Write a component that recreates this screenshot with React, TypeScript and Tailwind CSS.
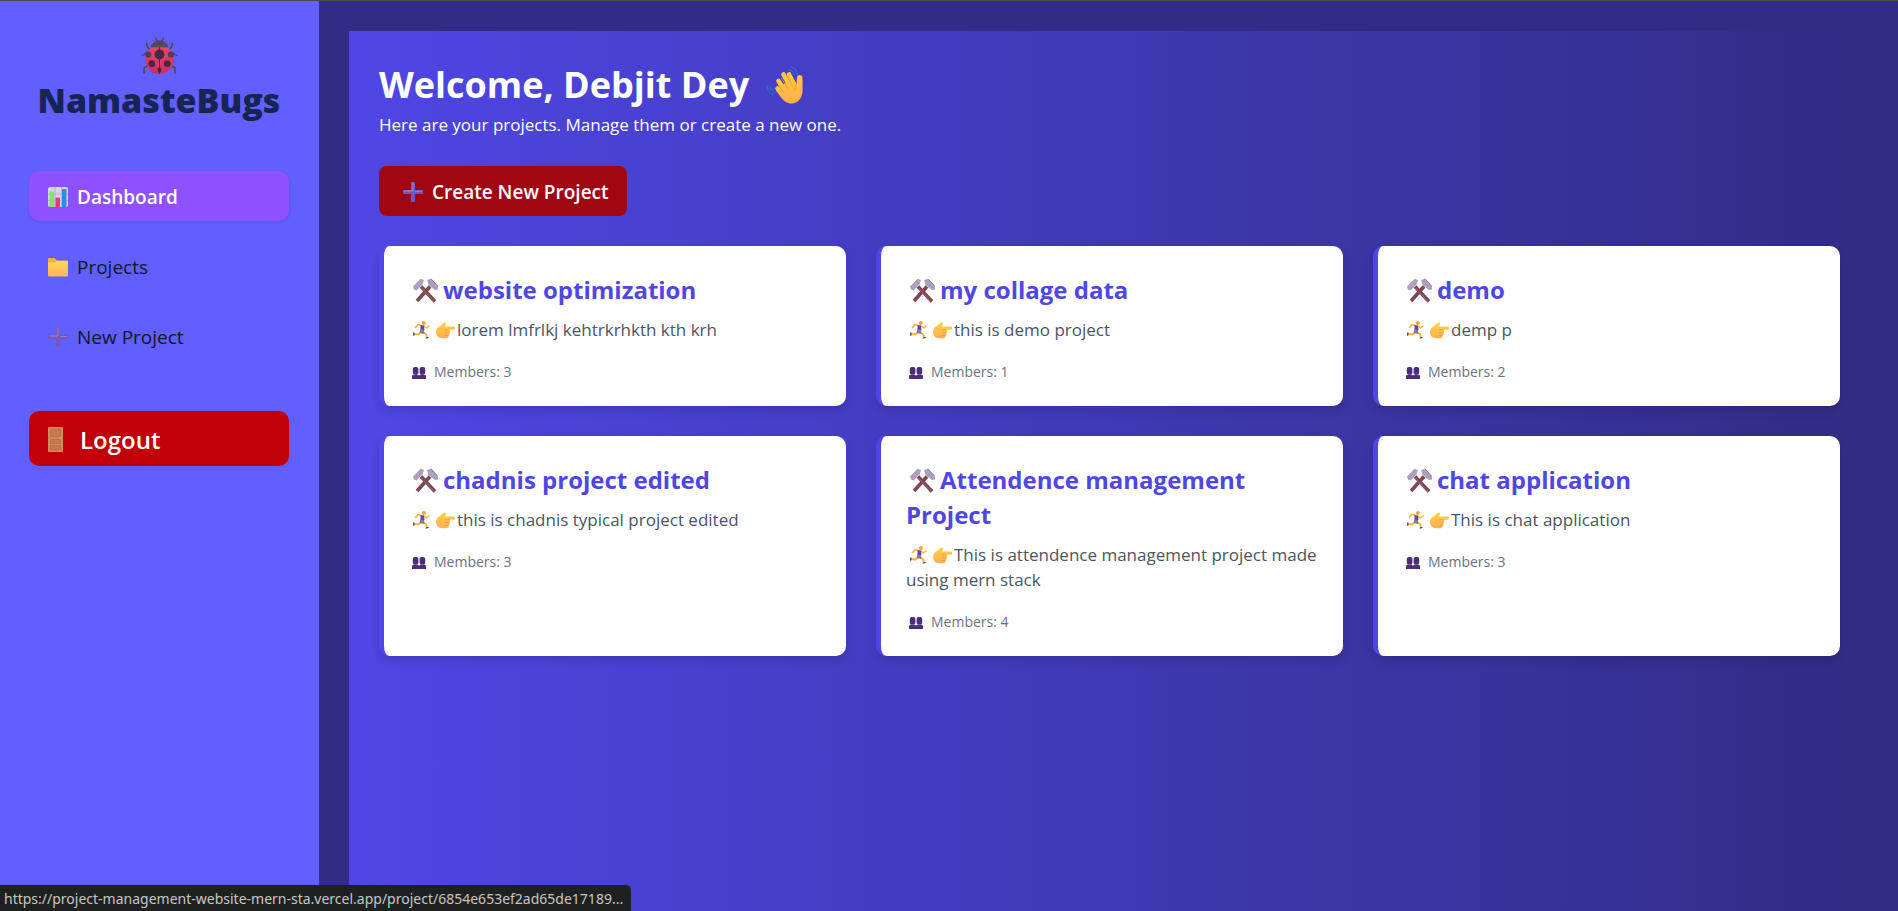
import React from "react";

type IconProps = { className?: string };

function Ladybug({ className }: IconProps) {
  return (
    <svg viewBox="0 0 36 36" className={className} aria-hidden="true">
      <defs>
        <linearGradient id="bug" x1="0" y1="0" x2="0" y2="1">
          <stop offset="0" stopColor="#e84a68" />
          <stop offset="1" stopColor="#c92a68" />
        </linearGradient>
      </defs>
      <g fill="none" stroke="#4d4457" strokeWidth="1.400" strokeLinecap="round">
        <path d="M14.300 1l1.500 3M21.700 1l-1.500 3" />
        <path d="M5.500 6q0 4 2.500 5.500M30.500 6q0 4-2.500 5.500M1 18l2.500-1.500 2.500 1M35 18l-2.500-1.500-2.500 1M3 35v-5l2.500-1.500M33 35v-5l-2.500-1.500" />
      </g>
      <circle cx="18" cy="22" r="14" fill="url(#bug)" />
      <path d="M9.500 10C10.500 5.500 14 3.500 18 3.500s7.500 2 8.500 6.500z" fill="#54495c" />
      <path d="M18 10v26" stroke="#4a2542" strokeWidth="1" />
      <g fill="#492741">
        <circle cx="18" cy="17" r="4.800" />
        <circle cx="10.500" cy="26" r="3.300" />
        <circle cx="25.500" cy="26" r="3.300" />
        <ellipse cx="18" cy="32" rx="1.800" ry="2.500" />
        <circle cx="7" cy="17" r="3" fill="#5a3a52" />
        <circle cx="29" cy="17" r="3" fill="#5a3a52" />
      </g>
    </svg>
  );
}

function ChartIcon({ className }: IconProps) {
  return (
    <svg viewBox="0 0 20 20" className={className} aria-hidden="true">
      <rect width="20" height="20" rx="2" fill="#d9d3e2" />
      <path d="M0 7h20M0 13.500h20M7 0v20M13.500 0v20" stroke="#b9b1c6" strokeWidth="1" />
      <rect x="1.500" y="4.500" width="4.500" height="15.500" rx=".5" fill="#86e36f" />
      <rect x="7.500" y="10.500" width="4.500" height="9.500" rx=".5" fill="#ee3a6c" />
      <rect x="14" y="2" width="4.500" height="18" rx=".5" fill="#2f8ddf" />
    </svg>
  );
}

function FolderIcon({ className }: IconProps) {
  return (
    <svg viewBox="0 0 20 20" className={className} aria-hidden="true">
      <defs>
        <linearGradient id="folder" x1="0" y1="0" x2="0" y2="1">
          <stop offset="0" stopColor="#ffd84f" />
          <stop offset="1" stopColor="#ffb65c" />
        </linearGradient>
      </defs>
      <path d="M0 2a1 1 0 0 1 1-1h5.500L9 3.500h10a1 1 0 0 1 1 1V10H0z" fill="#f3ae3f" />
      <path d="M0 5.500h7L9 4h10a1 1 0 0 1 1 1v13.500a1 1 0 0 1-1 1H1a1 1 0 0 1-1-1z" fill="url(#folder)" />
    </svg>
  );
}

function PlusIcon({ className }: IconProps) {
  return (
    <svg viewBox="0 0 20 20" className={className} aria-hidden="true">
      <rect x="8" width="4" height="20" rx="1" fill="#7556bd" />
      <rect y="8" width="20" height="4" rx="1" fill="#7556bd" />
      <path d="M9 1h1v8H1" stroke="#948bc4" strokeWidth="1" fill="none" />
      <path d="M19 9.500h-7" stroke="#8a7cc6" strokeWidth="1" />
    </svg>
  );
}

function DoorIcon({ className }: IconProps) {
  return (
    <svg viewBox="0 0 15 25" className={className} aria-hidden="true">
      <rect width="15" height="25" rx="1" fill="#d08c60" />
      <g fill="#c37b51" stroke="#b06a49" strokeWidth=".7">
        <rect x="2.500" y="2" width="10" height="7.500" />
        <rect x="2.500" y="12.500" width="10" height="4" />
        <rect x="2.500" y="18.500" width="10" height="4.500" />
      </g>
      <circle cx="12.500" cy="10.800" r="1.100" fill="#ff9a2e" />
    </svg>
  );
}

function WaveIcon({ className }: IconProps) {
  return (
    <svg viewBox="0 0 37 38" className={className} aria-hidden="true">
      <defs>
        <linearGradient id="wave" x1="0" y1="0" x2="0" y2="1">
          <stop offset="0" stopColor="#ffc741" />
          <stop offset="1" stopColor="#ffb04a" />
        </linearGradient>
      </defs>
      <g fill="none" stroke="#2272c9" strokeWidth="1.200" strokeLinecap="round">
        <path d="M22.500 3.500q5 1 6 6M25 1q6 2 6.500 8M4 19q0 5 4 7.500M1 19.500q0 6 5.500 9" />
      </g>
      <g stroke="#ffc741" strokeWidth="4.600" strokeLinecap="round" fill="none">
        <path d="M11.500 22.500 18 30M12.500 15 20 26M17.500 8.500 25 22M23 8.500 28 18" />
      </g>
      <path
        d="M9.700 24 14 20l13.500-6.500 3 5 .4-7c.3-3.500 5.600-3.500 5.600.3v12.200c0 8-4.500 13.500-11 13.500-4.500 0-7.500-2.500-10-5.500z"
        fill="url(#wave)"
      />
      <path
        d="m12.500 19.500 5 7M15.500 12.500l6.500 10M20.500 9.500l6 10M30.500 18.500q-2.500 3-1.500 6"
        stroke="#e59a2c"
        strokeWidth=".9"
        strokeLinecap="round"
        fill="none"
      />
    </svg>
  );
}

function HammersIcon({ className }: IconProps) {
  return (
    <svg viewBox="0 0 25 25" className={className} aria-hidden="true">
      <path d="M8 8.500 22 23.500M17 8.500 4 23" stroke="#7d4654" strokeWidth="3.600" />
      <path d="M8.500 10 21.500 24" stroke="#9a6468" strokeWidth="1" />
      <path d="M0 8.500 7.500.800 11 2 9.500 6.500 3.500 12.500 1 11.500z" fill="#ae9fbe" />
      <path d="M25 8.500v3l-3 .500L15.500 7 14 2 18 .800z" fill="#ae9fbe" />
      <path d="M18 .800 25 8.500" stroke="#76657f" strokeWidth=".8" />
    </svg>
  );
}

function RunnerIcon({ className }: IconProps) {
  return (
    <svg viewBox="0 0 17 18" className={className} aria-hidden="true">
      <g fill="none" strokeLinecap="round" strokeLinejoin="round">
        <path d="M8.500 4.500 5 3.500 2.500 6.500M11 5l2.500 2L16 5" stroke="#fbb23a" strokeWidth="1.600" />
        <path d="m8 11-2.500 2.500-4.500-.500M10 11.500l3 1.500 1 3.500" stroke="#fbb23a" strokeWidth="1.900" />
        <path d="M.8 11.800v2.500M13.200 17l2-.500" stroke="#4b3566" strokeWidth="1.200" />
      </g>
      <path d="m7.500 4 3.500.500.500 4.500-4 .5z" fill="#6546ab" />
      <path d="m7.500 8.500 3.500.500.500 4-5-1z" fill="#827c91" />
      <circle cx="10.800" cy="2" r="2" fill="#f7a531" />
    </svg>
  );
}

function PointIcon({ className }: IconProps) {
  return (
    <svg viewBox="0 0 19 17" className={className} aria-hidden="true">
      <defs>
        <linearGradient id="point" x1="0" y1="0" x2="0" y2="1">
          <stop offset="0" stopColor="#ffd23e" />
          <stop offset="1" stopColor="#ffae55" />
        </linearGradient>
      </defs>
      <path
        d="M0 10c0-3 1.500-4.500 3.500-5.500L7.500 1c1.500-1.500 3.300.3 2.300 1.800L8.500 4.500h9a1.600 1.600 0 0 1 0 3.200h-4.200c1.300.6 1.300 2.500 0 3 .8.900.5 2.400-.6 2.800.3 1.600-.7 2.700-2.200 2.700H6c-3.500 0-6-2.500-6-6.200z"
        fill="url(#point)"
      />
      <path d="M9 7.700h4.500M9 10.700h4.300M8.500 13.500h4" stroke="#ee9838" strokeWidth=".7" />
    </svg>
  );
}

function MembersIcon({ className }: IconProps) {
  return (
    <svg viewBox="0 0 14 12" className={className} aria-hidden="true">
      <g fill="#4b2d78">
        <rect x=".8" y="0" width="5.600" height="7.500" rx="2" />
        <rect x="7.600" y="0" width="5.600" height="7.500" rx="2" />
        <path d="M0 12V9.500q0-2 2-2h3.200Q7 7.500 7 9.500q0-2 1.800-2H12q2 0 2 2V12z" />
      </g>
    </svg>
  );
}

const navItems = [
  { label: "Dashboard", Icon: ChartIcon, active: true },
  { label: "Projects", Icon: FolderIcon, active: false },
  { label: "New Project", Icon: PlusIcon, active: false },
];

const projects = [
  { title: "website optimization", description: "lorem lmfrlkj kehtrkrhkth kth krh", members: 3 },
  { title: "my collage data", description: "this is demo project", members: 1 },
  { title: "demo", description: "demp p", members: 2 },
  { title: "chadnis project edited", description: "this is chadnis typical project edited", members: 3 },
  {
    title: "Attendence management Project",
    description: "This is attendence management project made using mern stack",
    members: 4,
  },
  { title: "chat application", description: "This is chat application", members: 3 },
];

function Sidebar() {
  return (
    <aside className="w-[319px] shrink-0 bg-[#615fff] pt-[32px] pr-[30px] pl-[29px]">
      <div className="flex flex-col items-center">
        <Ladybug className="mt-1 mb-1 size-[37px]" />
        <span className="text-[34px] leading-[45px] font-extrabold text-[#162456]">NamasteBugs</span>
      </div>
      <nav className="mt-[48px] flex flex-col gap-5">
        {navItems.map(({ label, Icon, active }) => (
          <a
            key={label}
            href="#"
            className={
              active
                ? "flex h-[50px] items-center gap-[9px] rounded-[10px] bg-[#8e51ff] px-[19px] pt-[2px] text-[19px] font-semibold text-white shadow-sm"
                : "flex h-[50px] items-center gap-[9px] rounded-[10px] px-[19px] pt-[2px] text-[19px] text-[#101828]"
            }
          >
            <Icon className="size-5" />
            {label}
          </a>
        ))}
      </nav>
      <button
        type="button"
        className="mt-[50px] flex h-[55px] w-full items-center gap-[17px] rounded-[10px] bg-[#c10007] px-[19px] pt-[2px] text-[24px] font-semibold text-white"
      >
        <DoorIcon className="h-[25px] w-[15px]" />
        Logout
      </button>
    </aside>
  );
}

function ProjectCard({ title, description, members }: (typeof projects)[number]) {
  return (
    <a
      href="#"
      className="block rounded-[10px] border-l-[5px] border-[#4f46e5] bg-white px-[25px] pt-[26px] pb-6 shadow-[0_5px_8px_rgba(0,0,0,0.12)]"
    >
      <h2 className="mb-[10px] text-[24px] leading-[35px] font-bold text-[#4f46e5]">
        <HammersIcon className="mr-[5px] ml-1 inline size-[25px] align-[-4px]" />
        {title}
      </h2>
      <p className="text-[17px] leading-[25px] text-[#4a5565]">
        <RunnerIcon className="mr-[6px] ml-1 inline h-[18px] w-[17px] align-[-3px]" />
        <PointIcon className="mr-[2px] inline h-[17px] w-[19px] align-[-3px]" />
        {description}
      </p>
      <p className="mt-5 text-[14px] leading-5 text-[#6a7282]">
        <MembersIcon className="mr-2 ml-[3px] inline h-3 w-[14px] align-[-2px]" />
        Members: {members}
      </p>
    </a>
  );
}

export default function App() {
  return (
    <div className="flex min-h-screen border-t border-[#4a4a4a] bg-[#312c85] font-['Open_Sans',sans-serif]">
      <Sidebar />
      <div className="flex min-w-0 grow pt-[30px] pr-7 pl-[30px]">
        <main className="grow bg-linear-to-r from-[#4f46e5] to-[#312c85] px-[30px] pt-[31px] pb-[30px]">
          <h1 className="flex items-center gap-[17px] text-[36px] leading-[45px] font-bold text-white">
            Welcome, Debjit Dey
            <WaveIcon className="h-[38px] w-[37px]" />
          </h1>
          <p className="mt-[5px] text-[17px] leading-[25px] text-white">
            Here are your projects. Manage them or create a new one.
          </p>
          <button
            type="button"
            className="mt-[29px] mb-[30px] flex h-[50px] items-center gap-[9px] rounded-[8px] bg-[#9f0712] pt-[2px] pr-[18px] pl-6 text-[19px] font-semibold text-white"
          >
            <PlusIcon className="size-5" />
            Create New Project
          </button>
          <div className="grid grid-cols-3 gap-[30px]">
            {projects.map((project) => (
              <ProjectCard key={project.title} {...project} />
            ))}
          </div>
        </main>
      </div>
      <div className="fixed bottom-0 left-0 flex h-[26px] items-center rounded-tr-[5px] bg-[#1f2020] pr-2 pl-1 font-['Noto_Sans',sans-serif] text-[14px] text-[#c7c7c7]">
        https://project-management-website-mern-sta.vercel.app/project/6854e653ef2ad65de17189...
      </div>
    </div>
  );
}
